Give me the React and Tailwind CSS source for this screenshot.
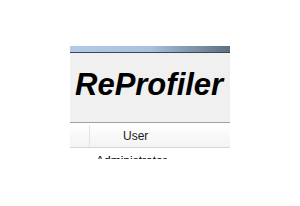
import React from 'react';

const App = () => {
  return (
    <div className="w-[300px] h-[206px] bg-white overflow-hidden" style={{ fontFamily: '"Liberation Sans", Arial, sans-serif' }}>
      <div className="ml-[70px] mt-[46px] w-[160px] h-[113px] overflow-hidden flex flex-col">
        {/* title bar edge */}
        <div className="h-[6px] shrink-0 bg-gradient-to-r from-[#b3cae6] via-[#a9c1de] to-[#5d7081]" />
        <div className="h-px shrink-0 bg-[#3a4858]" />

        {/* banner */}
        <div className="h-[69px] shrink-0 bg-[#f0f0f0] pt-[16px] pl-[5px]">
          <div className="text-[31px] leading-none font-bold italic text-black">ReProfiler</div>
        </div>
        <div className="h-px shrink-0 bg-[#a0a0a0]" />
        <div className="h-[2px] shrink-0 bg-white" />

        {/* list header */}
        <div className="h-[22px] shrink-0 flex bg-gradient-to-b from-white to-[#f2f3f5]">
          <div className="w-[19px] shrink-0" />
          <div className="w-px shrink-0 bg-[#e3e3e3]" />
          <div className="flex-1 flex items-center pl-[33px] text-[12px] text-[#1a1a1a]">User</div>
        </div>
        <div className="h-px shrink-0 bg-[#d5d5d5]" />

        {/* rows */}
        <div className="pt-[5px] pl-[26px] text-[12px] leading-[16px] text-black whitespace-nowrap">Administrator</div>
      </div>
    </div>
  );
};

export default App;
